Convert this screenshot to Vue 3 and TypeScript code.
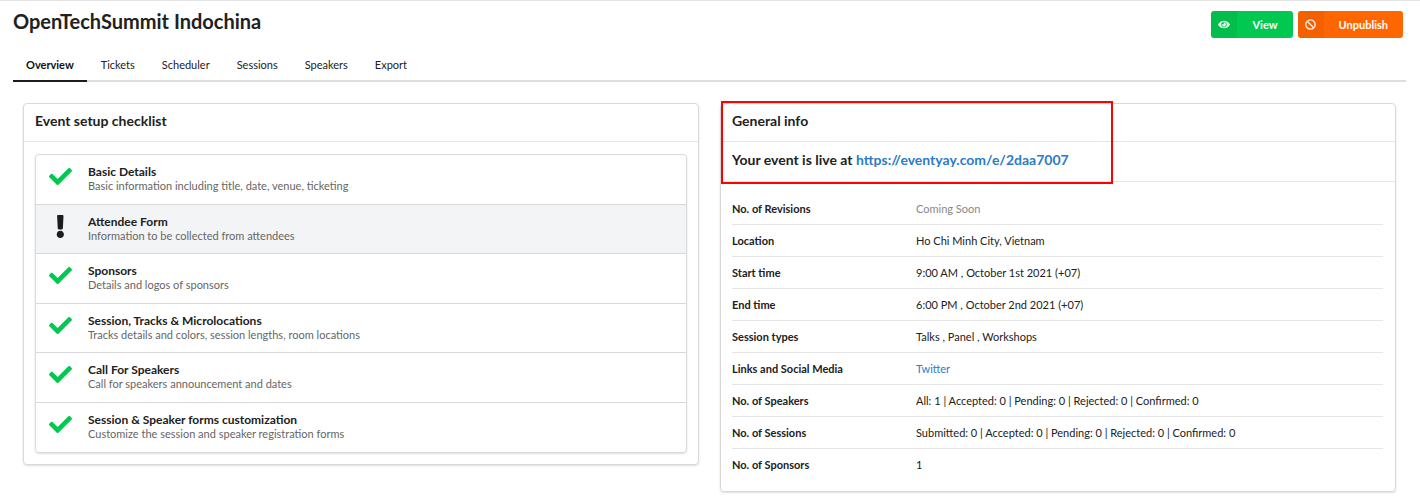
<script setup lang="ts">
import { ref } from 'vue'

interface Step {
  title: string
  description: string
  done: boolean
}

interface InfoRow {
  label: string
  value: string
  href?: string
  muted?: boolean
}

const tabs: string[] = ['Overview', 'Tickets', 'Scheduler', 'Sessions', 'Speakers', 'Export']
const activeTab = ref<string>('Overview')

const steps: Step[] = [
  { title: 'Basic Details', description: 'Basic information including title, date, venue, ticketing', done: true },
  { title: 'Attendee Form', description: 'Information to be collected from attendees', done: false },
  { title: 'Sponsors', description: 'Details and logos of sponsors', done: true },
  { title: 'Session, Tracks & Microlocations', description: 'Tracks details and colors, session lengths, room locations', done: true },
  { title: 'Call For Speakers', description: 'Call for speakers announcement and dates', done: true },
  { title: 'Session & Speaker forms customization', description: 'Customize the session and speaker registration forms', done: true },
]

const info: InfoRow[] = [
  { label: 'No. of Revisions', value: 'Coming Soon', muted: true },
  { label: 'Location', value: 'Ho Chi Minh City, Vietnam' },
  { label: 'Start time', value: '9:00 AM , October 1st 2021 (+07)' },
  { label: 'End time', value: '6:00 PM , October 2nd 2021 (+07)' },
  { label: 'Session types', value: 'Talks , Panel , Workshops' },
  { label: 'Links and Social Media', value: 'Twitter', href: '#twitter' },
  { label: 'No. of Speakers', value: 'All: 1 | Accepted: 0 | Pending: 0 | Rejected: 0 | Confirmed: 0' },
  { label: 'No. of Sessions', value: 'Submitted: 0 | Accepted: 0 | Pending: 0 | Rejected: 0 | Confirmed: 0' },
  { label: 'No. of Sponsors', value: '1' },
]
</script>

<template>
  <main class="page">
    <header class="top">
      <h1>OpenTechSummit Indochina</h1>
      <div class="actions">
        <button type="button" class="btn green">
          <span class="btn-icon">
            <svg viewBox="0 0 576 512" width="12" height="11" aria-hidden="true"><path d="M569.354 231.631C512.969 135.949 407.81 72 288 72 168.14 72 63.004 135.994 6.646 231.631a47.999 47.999 0 0 0 0 48.739C63.031 376.051 168.19 440 288 440c119.86 0 224.996-63.994 281.354-159.631a47.997 47.997 0 0 0 0-48.738zM288 392c-75.162 0-136-60.827-136-136 0-75.162 60.826-136 136-136 75.162 0 136 60.826 136 136 0 75.162-60.826 136-136 136zm104-136c0 57.438-46.562 104-104 104s-104-46.562-104-104c0-17.708 4.431-34.379 12.236-48.973l-.001.032c0 23.651 19.173 42.823 42.824 42.823s42.824-19.173 42.824-42.823c0-23.651-19.173-42.824-42.824-42.824l-.032.001C253.621 156.431 270.292 152 288 152c57.438 0 104 46.562 104 104z" /></svg>
          </span>
          <span class="btn-label">View</span>
        </button>
        <button type="button" class="btn orange">
          <span class="btn-icon">
            <svg viewBox="0 0 512 512" width="11" height="11" aria-hidden="true"><path d="M256 8C119.034 8 8 119.033 8 256s111.034 248 248 248 248-111.034 248-248S392.967 8 256 8zm130.108 117.892c65.448 65.448 70 165.481 20.677 235.637L150.47 105.216c70.204-49.356 170.226-44.735 235.638 20.676zM125.892 386.108c-65.448-65.448-70-165.481-20.677-235.637L361.53 406.784c-70.203 49.356-170.226 44.736-235.638-20.676z" /></svg>
          </span>
          <span class="btn-label">Unpublish</span>
        </button>
      </div>
    </header>

    <nav class="tabs">
      <a
        v-for="tab in tabs"
        :key="tab"
        :href="'#' + tab.toLowerCase()"
        :class="{ active: tab === activeTab }"
        @click.prevent="activeTab = tab"
      >{{ tab }}</a>
    </nav>

    <div class="columns">
      <section class="card">
        <h2 class="card-title">Event setup checklist</h2>
        <ul class="steps">
          <li v-for="step in steps" :key="step.title" :class="{ pending: !step.done }">
            <svg v-if="step.done" class="check" viewBox="0 0 512 512" aria-hidden="true"><path d="M173.898 439.404l-166.4-166.4c-9.997-9.997-9.997-26.206 0-36.204l36.203-36.204c9.997-9.998 26.207-9.998 36.204 0L192 312.69 432.095 72.596c9.997-9.997 26.207-9.997 36.204 0l36.203 36.204c9.997 9.997 9.997 26.206 0 36.204l-294.4 294.401c-9.998 9.997-26.207 9.997-36.204-.001z" /></svg>
            <svg v-else class="bang" viewBox="0 0 192 512" aria-hidden="true"><path d="M176 432c0 44.112-35.888 80-80 80s-80-35.888-80-80 35.888-80 80-80 80 35.888 80 80zM25.26 25.199l13.6 272C39.499 309.972 50.041 320 62.83 320h66.34c12.789 0 23.331-10.028 23.97-22.801l13.6-272C167.425 11.49 156.496 0 142.77 0H49.23C35.504 0 24.575 11.49 25.26 25.199z" /></svg>
            <div>
              <h3>{{ step.title }}</h3>
              <p>{{ step.description }}</p>
            </div>
          </li>
        </ul>
      </section>

      <section class="card">
        <h2 class="card-title">General info</h2>
        <p class="live">Your event is live at <a href="https://eventyay.com/e/2daa7007">https://eventyay.com/e/2daa7007</a></p>
        <div class="table-wrap">
          <table>
            <tbody>
              <tr v-for="row in info" :key="row.label">
                <th scope="row">{{ row.label }}</th>
                <td :class="{ muted: row.muted }">
                  <a v-if="row.href" :href="row.href">{{ row.value }}</a>
                  <template v-else>{{ row.value }}</template>
                </td>
              </tr>
            </tbody>
          </table>
        </div>
        <div class="highlight" aria-hidden="true"></div>
      </section>
    </div>
  </main>
</template>

<style>
body {
  margin: 0;
  background: #fff;
}
</style>

<style scoped>
.page {
  box-sizing: border-box;
  border-top: 1px solid #e4e4e5;
  padding: 0 14px 5px 13px;
  font-family: Lato, "Liberation Sans", sans-serif;
  font-size: 11px;
  line-height: 16px;
  color: #212121;
}

h1,
h2,
h3,
p,
ul {
  margin: 0;
  padding: 0;
}

a {
  color: #2b7bc8;
  text-decoration: none;
}

.top {
  display: flex;
  justify-content: space-between;
  align-items: flex-start;
  padding: 8px 3px 0 0;
}

h1 {
  font-size: 20px;
  line-height: 24px;
}

.actions {
  display: flex;
  gap: 5px;
  padding-top: 2px;
}

.btn {
  display: flex;
  align-items: stretch;
  height: 27px;
  padding: 0;
  border: 0;
  border-radius: 3px;
  overflow: hidden;
  font: bold 11px/27px Lato, "Liberation Sans", sans-serif;
  color: #fff;
  cursor: pointer;
}

.btn-icon {
  display: flex;
  align-items: center;
  justify-content: center;
  width: 26px;
  background: rgba(0, 0, 0, 0.05);
}

.btn-icon svg {
  fill: #fff;
  opacity: 0.85;
}

.btn-label {
  padding: 0 15px;
}

.green {
  background: #00c851;
}

.orange {
  background: #ff6600;
}

.tabs {
  display: flex;
  gap: 1px;
  margin-top: 12px;
  border-bottom: 2px solid #dededf;
}

.tabs a {
  margin-bottom: -2px;
  padding: 6px 13px;
  border-bottom: 2px solid transparent;
  line-height: 18px;
  color: #212121;
}

.tabs a.active {
  border-color: #1b1c1d;
  font-weight: bold;
  color: #111;
}

.columns {
  display: grid;
  grid-template-columns: 1fr 1fr;
  align-items: start;
  gap: 21px;
  padding: 21px 10px 0;
}

.card {
  position: relative;
  border: 1px solid #d9d9da;
  border-radius: 4px;
  box-shadow: 0 1px 2px rgba(34, 36, 38, 0.15);
}

.card-title {
  padding: 7px 11px 10px;
  border-bottom: 1px solid #e5e5e6;
  font-size: 14px;
  line-height: 20px;
}

.steps {
  display: grid;
  grid-auto-rows: 1fr;
  box-sizing: border-box;
  min-height: 299px;
  margin: 12px 11px 11px;
  border: 1px solid #d9d9da;
  border-radius: 4px;
  box-shadow: 0 1px 2px rgba(34, 36, 38, 0.15);
  list-style: none;
}

.steps li {
  display: grid;
  grid-template-columns: 23px 1fr;
  align-items: center;
  column-gap: 16px;
  padding: 0 13px 1px;
  border-bottom: 1px solid #d9d9da;
}

.steps li:last-child {
  border-bottom-color: transparent;
}

.steps .pending {
  background: #f3f4f5;
}

.steps svg {
  justify-self: center;
  height: 23px;
  margin-bottom: 4px;
}

.check {
  fill: #00c851;
}

.bang {
  fill: #1b1c1d;
}

.steps h3 {
  font-size: 12px;
  line-height: 15px;
}

.steps p {
  line-height: 14px;
  color: #666;
}

.live {
  padding: 8px 11px 11px;
  border-bottom: 1px solid #e5e5e6;
  font-size: 14px;
  line-height: 20px;
  font-weight: bold;
}

.table-wrap {
  padding: 11px 12px 11px 11px;
}

table {
  width: 100%;
  border-collapse: separate;
  border-spacing: 0;
  table-layout: fixed;
}

th,
td {
  padding: 8px 0 7px;
  border-bottom: 1px solid #e5e5e6;
  text-align: left;
}

th {
  width: 184px;
}

tr:last-child th,
tr:last-child td {
  border-bottom: 0;
}

.muted {
  color: #888;
}

/* Callout frame laid over the top of the card */
.highlight {
  position: absolute;
  top: -3px;
  left: 0;
  box-sizing: border-box;
  width: 392px;
  height: 83px;
  border: 2px solid #f00;
  pointer-events: none;
}
</style>
